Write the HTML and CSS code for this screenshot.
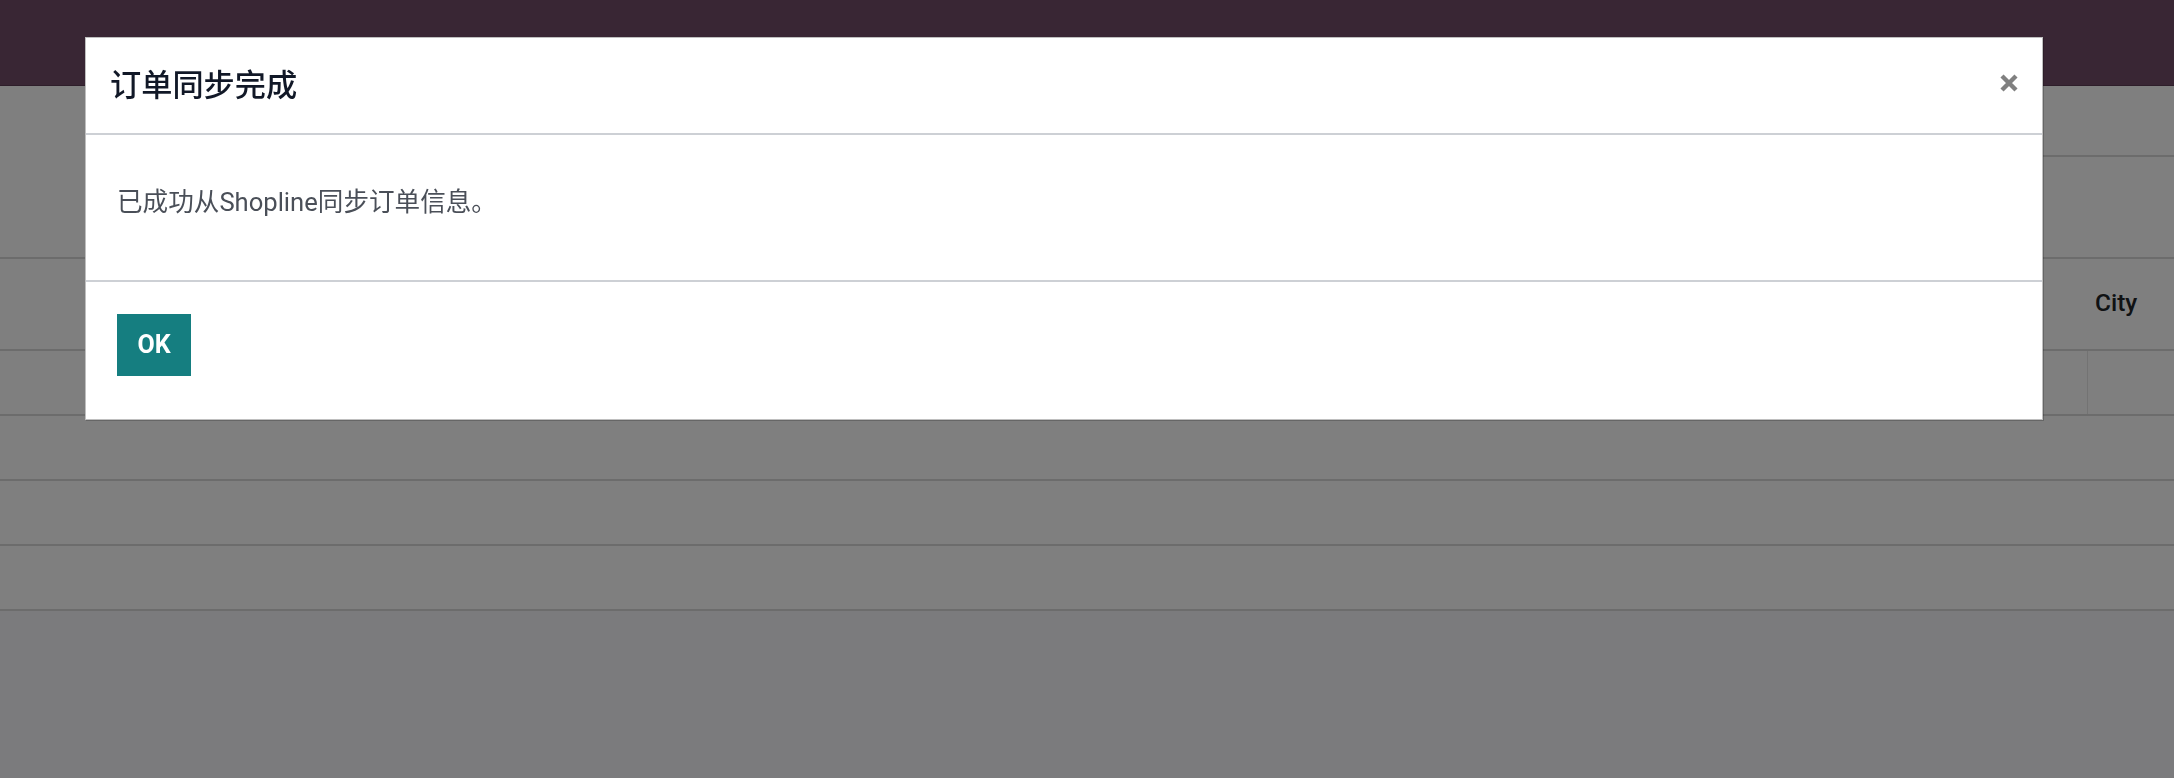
FILE: index.html
```html
<!DOCTYPE html>
<html lang="zh-CN">
<head>
    <meta charset="UTF-8">
    <meta name="viewport" content="width=device-width, initial-scale=1.0">
    <title>订单同步完成</title>
    <link rel="stylesheet" href="styles.css">
</head>
<body>
    <header class="navbar"></header>

    <div class="control-panel">
        <div class="cp-top">
            <div class="cp-search"></div>
        </div>
        <div class="cp-bottom"></div>
    </div>

    <div class="list">
        <div class="list-row list-head">
            <div class="cell"></div>
            <div class="cell cell-city">City</div>
        </div>
        <div class="list-row first-row">
            <div class="cell"></div>
            <div class="cell cell-city"></div>
        </div>
        <div class="list-row">
            <div class="cell"></div>
            <div class="cell"></div>
        </div>
        <div class="list-row">
            <div class="cell"></div>
            <div class="cell"></div>
        </div>
        <div class="list-row">
            <div class="cell"></div>
            <div class="cell"></div>
        </div>
    </div>

    <!-- sync result dialog -->
    <div class="backdrop">
        <div class="modal">
            <div class="modal-header">
                <h4 class="modal-title">订单同步完成</h4>
                <button class="btn-close" aria-label="Close">
                    <svg width="18" height="18" viewBox="0 0 18 18">
                        <path d="M2 2 L16 16 M16 2 L2 16" stroke="#808080" stroke-width="4.4" stroke-linecap="butt" fill="none"/>
                    </svg>
                </button>
            </div>
            <div class="modal-body">已成功从Shopline同步订单信息。</div>
            <div class="modal-footer">
                <button class="btn-primary">OK</button>
            </div>
        </div>
    </div>
</body>
</html>
```

FILE: styles.css
```css
* {
    box-sizing: border-box;
}
body {
    margin: 0;
    font-family: Roboto, "Noto Sans CJK SC", sans-serif;
    font-size: 24.4px;
    line-height: 1.5;
    color: #212529;
    background-color: #f6f6fa;
    min-height: 100vh;
}

/* page behind the dialog */
.navbar {
    height: 86px;
    background-color: #734d69;
    border-bottom: 1px solid #5c3c54;
}
.control-panel {
    background-color: #ffffff;
}
.cp-top {
    height: 71px;
}
.cp-search {
    height: 71px;
    margin-left: 55%;
    border-bottom: 2px solid #d8d8d8;
}
.cp-bottom {
    height: 102px;
    border-bottom: 2px solid #d8d8d8;
}
.list {
    background-color: #ffffff;
}
.list-row {
    display: grid;
    grid-template-columns: 1fr 87px;
    height: 65px;
    border-bottom: 2px solid #d8d8d8;
}
.list-head {
    height: 92px;
}
.cell {
    display: flex;
    align-items: center;
    padding: 0 8px;
}
.list-head .cell-city {
    font-weight: 500;
    padding-bottom: 2px;
}
.first-row .cell-city {
    border-left: 1px solid #e6e6e6;
}

/* dialog */
.backdrop {
    position: fixed;
    inset: 0;
    background-color: rgba(0, 0, 0, 0.5);
}
.modal {
    width: 1958px;
    margin: 37px 0 0 85px;
    background-color: #ffffff;
    border: 1px solid rgba(0, 0, 0, 0.25);
    box-shadow: 1px 1px 0 rgba(0, 0, 0, 0.2);
}
.modal-header {
    display: flex;
    align-items: center;
    justify-content: space-between;
    height: 97px;
    padding: 0 24px 0 24px;
    border-bottom: 2px solid #cdd0d5;
}
.modal-title {
    margin: 0;
    font-size: 31.2px;
    font-weight: 500;
    line-height: 1.2;
    color: #111827;
}
.btn-close {
    display: flex;
    padding: 0;
    margin-bottom: 6px;
    border: none;
    background: none;
    cursor: pointer;
}
.modal-body {
    height: 147px;
    padding: 48px 31px 0;
    font-size: 25.6px;
    color: #4a4f58;
    border-bottom: 2px solid #cdd0d5;
}
.modal-footer {
    padding: 32px 31px 43px;
}
.btn-primary {
    font-family: Roboto, "Noto Sans CJK SC", sans-serif;
    font-size: 25px;
    font-weight: 700;
    line-height: 1.5;
    color: #ffffff;
    background-color: #157e80;
    border: none;
    border-radius: 0;
    padding: 12px 20.5px;
    cursor: pointer;
}
```
